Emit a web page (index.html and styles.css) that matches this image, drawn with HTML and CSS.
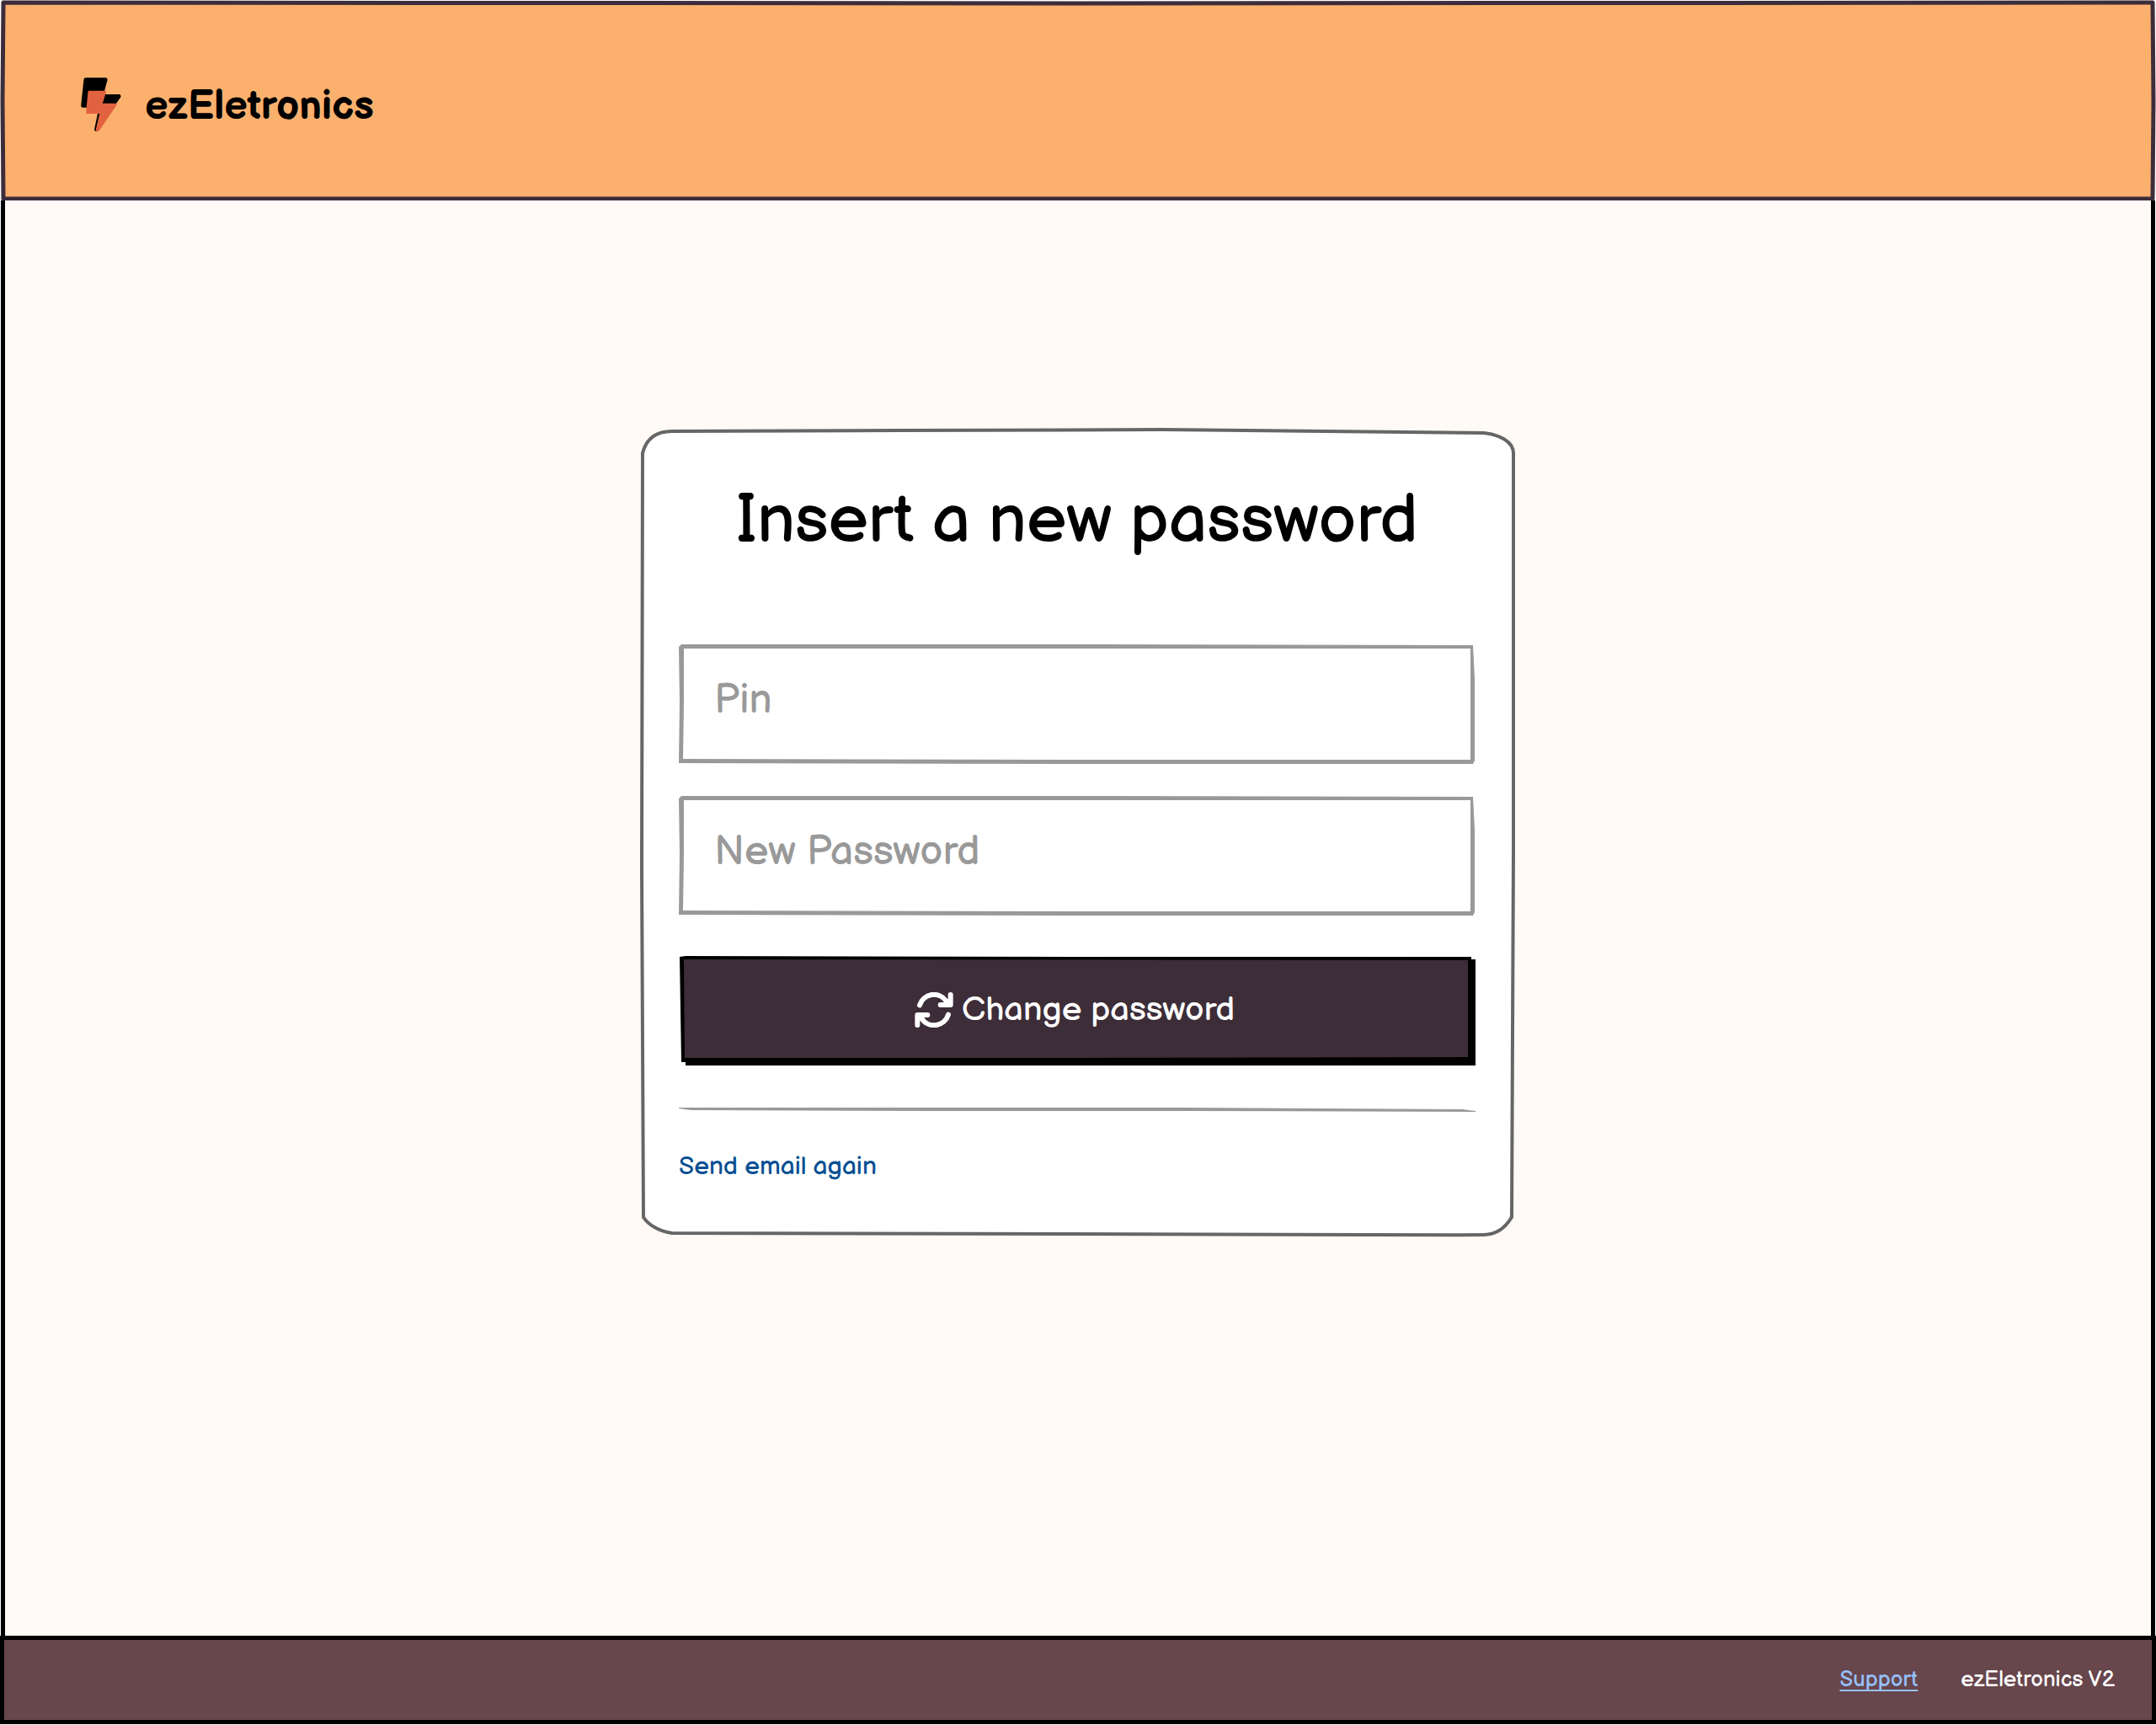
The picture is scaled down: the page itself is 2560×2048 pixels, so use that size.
FILE: index.html
```html
<!DOCTYPE html>
<html lang="en">
<head>
  <meta charset="utf-8">
  <meta name="viewport" content="width=device-width, initial-scale=1">
  <title>ezEletronics</title>
  <link rel="stylesheet" href="styles.css">
</head>
<body class="page">
  <header class="header">
    <svg class="logo-icon" viewBox="48 36 145 193" aria-hidden="true">
      <path d="M65 43H137L121 103H185L103 222L121 137H55Z" fill="#000" stroke="#000" stroke-width="13" stroke-linejoin="round"/>
      <path d="M78 88H134L120 133H172L110 224H106L121 161H71Z" fill="#e2623f" stroke="#e2623f" stroke-width="9" stroke-linejoin="round"/>
    </svg>
    <span class="logo-name">ezEletronics</span>
  </header>

  <main class="main">
    <form class="card">
      <h1 class="title">Insert a new password</h1>
      <div class="fields">
        <input class="field" type="text" placeholder="Pin" aria-label="Pin">
        <input class="field" type="password" placeholder="New Password" aria-label="New Password">
      </div>
      <button class="submit" type="submit">
        <svg class="refresh-icon" viewBox="52 57 136 126" fill="none" stroke="#fff" stroke-width="18" stroke-linecap="round" stroke-linejoin="round" aria-hidden="true">
          <path d="M69 103A53 53 0 0 1 163 88"/>
          <path d="M179 66V102H143"/>
          <path d="M160 84L179 84V102H158Z" fill="#fff" stroke-width="4"/>
          <path d="M171 137A53 53 0 0 1 77 152"/>
          <path d="M61 174V138H97"/>
          <path d="M80 156L61 156V138H82Z" fill="#fff" stroke-width="4"/>
        </svg>
        <span>Change password</span>
      </button>
      <hr class="divider">
      <a class="resend" href="#">Send email again</a>
    </form>
  </main>

  <footer class="footer">
    <a class="support" href="#">Support</a>
    <span>ezEletronics V2</span>
  </footer>
</body>
</html>
```

FILE: styles.css
```css
* {
  box-sizing: border-box;
}

.page {
  display: flex;
  flex-direction: column;
  min-height: 100vh;
  margin: 0;
  background: #fff;
  font-family: "Balsamiq Sans", "Liberation Sans", Arial, sans-serif;
}

.header,
.card,
.field,
.submit,
.divider {
  background-repeat: no-repeat;
  background-size: 100% 100%;
}

/* Header */
.header {
  display: flex;
  align-items: flex-start;
  gap: 28px;
  padding: 92px 96px 76px;
  background-image: url("data:image/svg+xml,%3Csvg xmlns='http://www.w3.org/2000/svg' viewBox='0 0 2560 238' preserveAspectRatio='none'%3E%3Cpath fill='%23fcb06e' stroke='%233d2d3a' stroke-width='5' stroke-linejoin='round' d='M4 3L1280 4L2556 3L2557 120L2556 236L4 236L3 120Z'/%3E%3C/svg%3E");
}

.logo-icon {
  width: 48px;
  height: 64px;
}

.logo-name {
  font-size: 48px;
  font-weight: 700;
  line-height: 70px;
}

/* Content */
.main {
  display: flex;
  flex: 1;
  justify-content: center;
  align-items: flex-start;
  margin: 0 1px;
  padding: 270px 24px 80px;
  border: solid #000;
  border-width: 0 5px;
  background: #fffaf5;
}

.card {
  display: flex;
  flex-direction: column;
  width: 100%;
  max-width: 1040px;
  padding: 63px 48px 64px 46px;
  background-image: url("data:image/svg+xml,%3Csvg xmlns='http://www.w3.org/2000/svg' viewBox='0 0 1040 958' preserveAspectRatio='none'%3E%3Cpath fill='%23fff' stroke='%23666' stroke-width='4' stroke-linejoin='round' d='M38 4C250 4 400 2 620 2C760 3 900 5 1002 6C1020 8 1037 16 1037 30L1037 500L1035 934C1029 944 1019 955 1002 955C700 957 400 956 38 953C24 951 10 944 4 934L2 520L3 30C7 14 18 4 38 4Z'/%3E%3C/svg%3E");
}

.title {
  margin: 0 0 98px;
  font-size: 80px;
  font-weight: 400;
  line-height: 96px;
  text-align: center;
}

.fields {
  display: flex;
  flex-direction: column;
  gap: 38px;
  margin-bottom: 48px;
}

.field {
  width: 100%;
  height: 142px;
  padding: 0 42px 10px;
  border: 0;
  background-color: transparent;
  background-image: url("data:image/svg+xml,%3Csvg xmlns='http://www.w3.org/2000/svg' viewBox='0 0 946 142' preserveAspectRatio='none'%3E%3Cpath fill='%23999' fill-rule='evenodd' d='M3 0L500 0L943 1L945 40L945 90L945 138L943 142L470 142L0 141L1 70L0 3ZM6 5L480 5L940 5L940 70L940 137L470 137L5 136L6 70Z'/%3E%3C/svg%3E");
  color: #000;
  font-family: inherit;
  font-size: 48px;
}

.field::placeholder {
  color: #999;
  opacity: 1;
}

.submit {
  display: flex;
  justify-content: center;
  align-items: center;
  gap: 10px;
  height: 130px;
  margin-bottom: 50px;
  padding: 4px 6px 6px 0;
  border: 0;
  background-color: transparent;
  background-image: url("data:image/svg+xml,%3Csvg xmlns='http://www.w3.org/2000/svg' viewBox='0 0 946 130' preserveAspectRatio='none'%3E%3Cpath d='M1 1L8 0L470 1L941 1V4H946V130H8V126H3Z'/%3E%3Cpath fill='%233d2d38' d='M6 4L937 5V120L470 121L7 121Z'/%3E%3C/svg%3E");
  color: #fff;
  font-family: inherit;
  font-size: 40px;
}

.refresh-icon {
  width: 46px;
  height: 42px;
}

.divider {
  width: 100%;
  height: 6px;
  margin: 0 0 44px;
  border: 0;
  background-image: url("data:image/svg+xml,%3Csvg xmlns='http://www.w3.org/2000/svg' viewBox='0 0 946 6' preserveAspectRatio='none'%3E%3Cpath fill='%23999' d='M0 0L600 0L930 2L946 4V5L600 4L300 4L14 3L0 1Z'/%3E%3C/svg%3E");
}

.resend {
  align-self: flex-start;
  color: #084f93;
  font-size: 30px;
  line-height: 40px;
  text-decoration: none;
}

/* Footer */
.footer {
  display: flex;
  justify-content: flex-end;
  align-items: center;
  gap: 51px;
  margin-bottom: 1px;
  padding: 30px 44px 30px;
  border: 5px solid #000;
  background: #67464c;
  color: #fff;
  font-size: 26px;
  line-height: 35px;
}

.support {
  color: #96c0fa;
  text-decoration: underline;
  text-decoration-skip-ink: none;
  text-decoration-thickness: 2px;
  text-underline-offset: 4px;
}
```
